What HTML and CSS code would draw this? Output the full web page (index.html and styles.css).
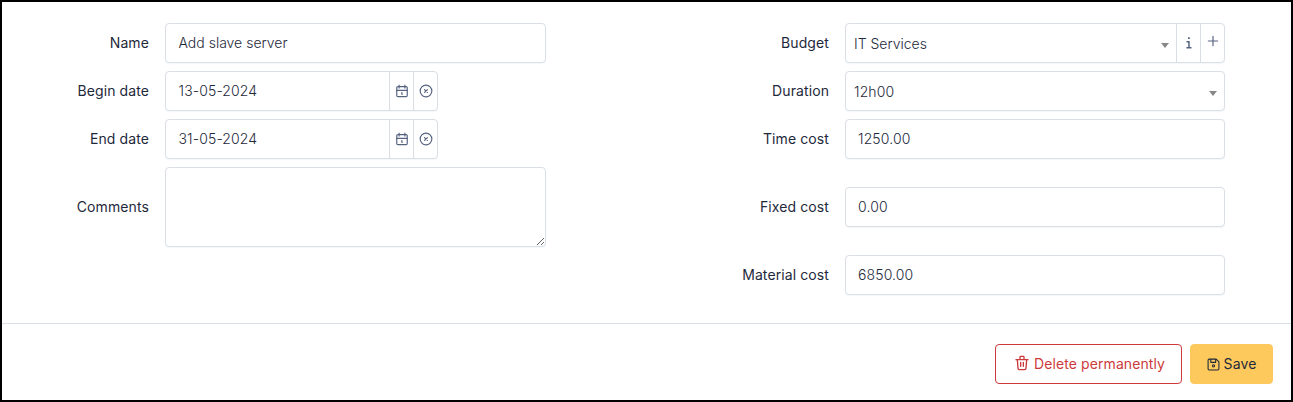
FILE: index.html
```html
<!DOCTYPE html>
<html lang="en">
<head>
<meta charset="utf-8">
<title>Project task cost</title>
<link rel="stylesheet" href="styles.css">
</head>
<body>
<form class="panel">
  <div class="fields">
    <div class="column">
      <div class="row"><label>Name</label><div class="control text">Add slave server</div></div>
      <div class="row"><label>Begin date</label><div class="control group date"><span class="value">13-05-2024</span><span class="addon"><svg viewBox="0 0 24 24"><rect x="3" y="4.5" width="18" height="17" rx="2"/><path d="M17 2v5M7 2v5M3 11h18M11 15h1v3"/></svg></span><span class="addon"><svg viewBox="0 0 24 24"><circle cx="12" cy="12" r="10"/><path d="M9.5 9.5l5 5M14.5 9.5l-5 5"/></svg></span></div></div>
      <div class="row"><label>End date</label><div class="control group date"><span class="value">31-05-2024</span><span class="addon"><svg viewBox="0 0 24 24"><rect x="3" y="4.5" width="18" height="17" rx="2"/><path d="M17 2v5M7 2v5M3 11h18M11 15h1v3"/></svg></span><span class="addon"><svg viewBox="0 0 24 24"><circle cx="12" cy="12" r="10"/><path d="M9.5 9.5l5 5M14.5 9.5l-5 5"/></svg></span></div></div>
      <div class="row"><label>Comments</label><textarea class="control comments"></textarea></div>
    </div>
    <div class="column right">
      <div class="row"><label>Budget</label><div class="control group text"><span class="value select">IT Services<i class="caret"></i></span><span class="addon"><svg class="info" viewBox="0 0 14 14"><path d="M6 1.2h1.8v1.9H6zM4.5 5h3.2v6h1.8v1.4H4.4V11h1.8V6.4H4.5z"/></svg></span><span class="addon plus"><svg viewBox="0 0 24 24"><path d="M12 4v16M4 12h16"/></svg></span></div></div>
      <div class="row"><label>Duration</label><div class="control group"><span class="value select">12h00<i class="caret"></i></span></div></div>
      <div class="row"><label>Time cost</label><div class="control">1250.00</div></div>
      <div class="row tall"><label>Fixed cost</label><div class="control">0.00</div></div>
      <div class="row"><label>Material cost</label><div class="control">6850.00</div></div>
    </div>
  </div>
  <div class="actions">
    <button type="button" class="btn delete"><svg viewBox="0 0 24 24"><path d="M3 7h18M10 11v6M14 11v6M5 7l1 13a2 2 0 0 0 2 2h8a2 2 0 0 0 2-2l1-13M9 7V3a1 1 0 0 1 1-1h4a1 1 0 0 1 1 1v4"/></svg><span>Delete permanently</span></button>
    <button type="button" class="btn save"><svg viewBox="0 0 24 24"><path d="M4 2h13l5 5v13a2 2 0 0 1-2 2H4a2 2 0 0 1-2-2V4a2 2 0 0 1 2-2M16 2v6H7V2"/><circle cx="12" cy="14.5" r="2"/></svg><span>Save</span></button>
  </div>
</form>
</body>
</html>
```
FILE: styles.css
```css
* { box-sizing: border-box; }
body { margin: 0; background: #fff; color: #1e293b; font: 14px/20px Inter, sans-serif; }
.panel { display: flex; flex-direction: column; height: 402px; border: 2px solid #000; }
.fields { display: flex; gap: 179px; height: 321px; padding: 21px 0 0 43px; }
.column { display: flex; flex-direction: column; flex: none; gap: 8px; width: 501px; }
.right { width: 500px; }
.row { display: grid; grid-template-columns: 104px 1fr; column-gap: 16px; align-items: center; }
.row label { text-align: right; font-weight: 430; letter-spacing: .1px; }
.tall { padding: 20px 0; }
.control { height: 40px; border: 1px solid #dadfe5; border-radius: 4px; padding: 9px 12px; background: #fff; box-shadow: 0 1px 1px rgba(30, 41, 59, .04); font-weight: 350; letter-spacing: .12px; }
.text { padding-left: 12.5px; letter-spacing: 0; }
.comments { display: block; width: 100%; height: 80px; resize: vertical; }
.group { display: flex; padding: 0; }
.date { width: 273px; }
.value { flex: 1; padding: 9px 12px 9px 12.5px; }
.select { display: flex; justify-content: space-between; align-items: center; padding: 11px 7px 9px 8px; }
.caret { border: 4px solid transparent; border-top: 5px solid #888; border-bottom: 0; margin-top: 2px; }
.addon { display: flex; align-items: center; justify-content: center; width: 24px; border-left: 1px solid #dadfe5; }
svg { width: 14px; height: 14px; fill: none; stroke: currentColor; stroke-width: 2; stroke-linecap: round; stroke-linejoin: round; }
.addon svg { color: #566380; }
.addon .info { fill: currentColor; stroke: none; }
.plus { padding-bottom: 4px; }
.group.text { padding-left: 0; }
.actions { flex: 1; display: flex; justify-content: flex-end; gap: 8px; padding: 20px 18px 0 0; border-top: 1px solid #dadfe5; }
.btn { display: flex; align-items: center; justify-content: center; height: 40px; padding: 0; border: 1px solid; border-radius: 4px; font: 430 14px/20px Inter, sans-serif; letter-spacing: .1px; }
.delete { width: 187px; gap: 4px; padding-left: 2px; color: #cd3a3c; border-color: #cd3a3c; background: #fff; }
.delete svg { width: 16px; height: 16px; margin-bottom: 2px; }
.save { width: 83px; gap: 4px; color: #1e293b; border-color: #fec95c; background: #fec95c; }
.save svg { width: 13px; height: 13px; }
```
